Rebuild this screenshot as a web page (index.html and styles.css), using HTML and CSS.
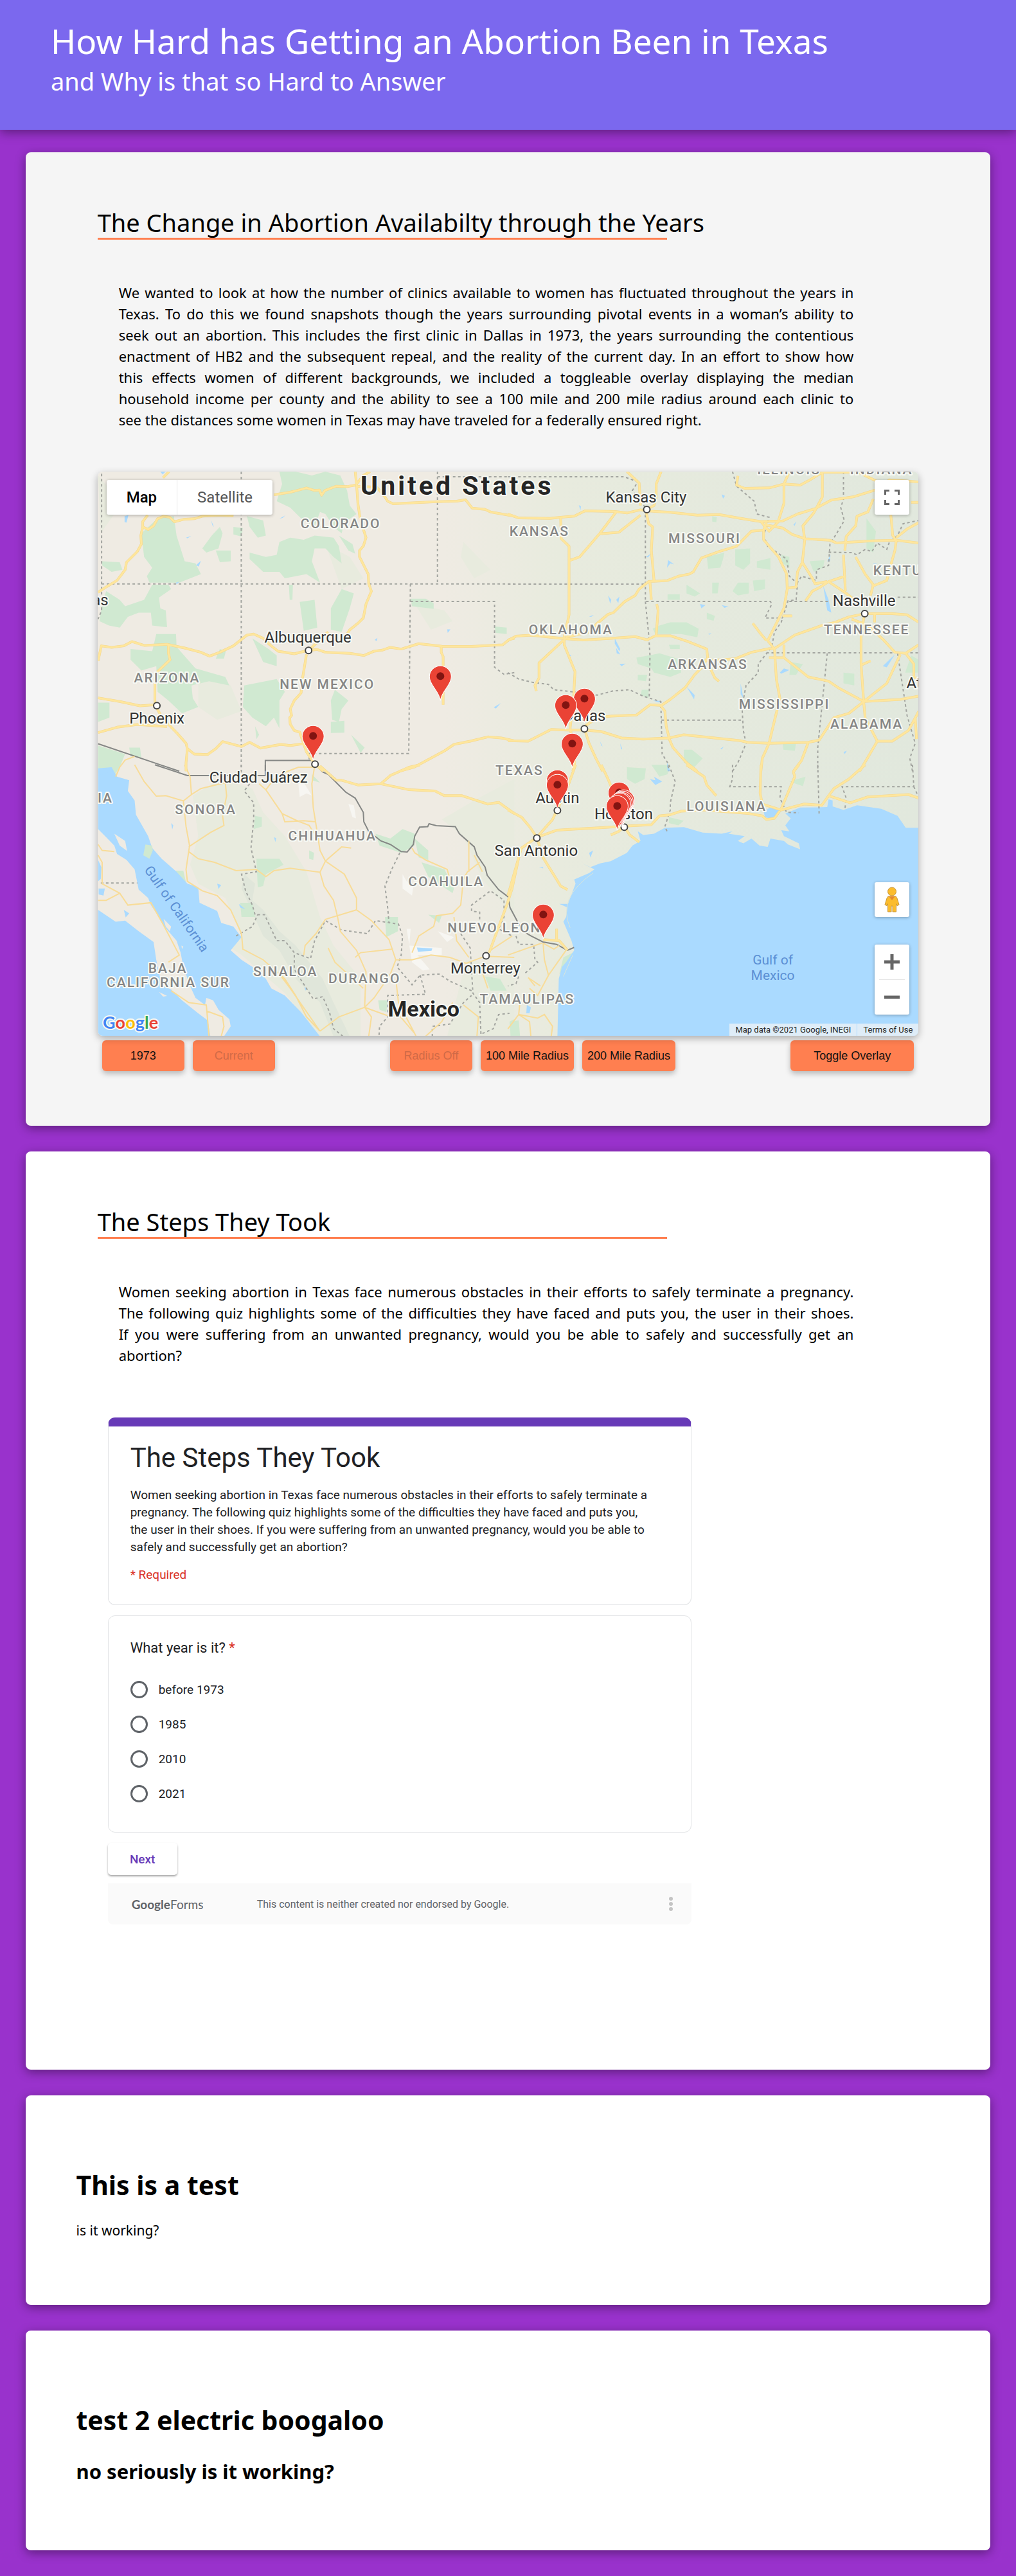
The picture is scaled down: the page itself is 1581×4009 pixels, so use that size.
FILE: index.html
```html
<!DOCTYPE html>
<html lang="en">
<head>
<meta charset="utf-8">
<meta name="viewport" content="width=device-width, initial-scale=1">
<title>How Hard has Getting an Abortion Been in Texas</title>
<link rel="stylesheet" href="styles.css">
</head>
<body>
<header class="banner">
  <h1 class="banner-title">How Hard has Getting an Abortion Been in Texas</h1>
  <p class="banner-sub">and Why is that so Hard to Answer</p>
</header>
<main class="cards">
  <section class="card card-tinted">
    <h2 class="story-title">The Change in Abortion Availabilty through the Years</h2>
    <hr class="rule">
    <p class="story">We wanted to look at how the number of clinics available to women has fluctuated throughout the years in Texas. To do this we found snapshots though the years surrounding pivotal events in a woman’s ability to seek&nbsp;out an abortion. This includes the first clinic in Dallas in 1973, the years surrounding the contentious enactment of HB2 and the subsequent repeal, and the reality of the current day. In an effort to show how this&nbsp;effects women of different backgrounds, we included a toggleable overlay displaying the median household&nbsp;income per county and the ability to see a 100 mile and 200 mile radius around each clinic to see&nbsp;the&nbsp;distances some women in Texas may have traveled for a federally ensured right.</p>
    <div class="map">
      <svg class="map-canvas" viewBox="0 0 1277 878" role="img" aria-label="Map of clinics in Texas">
        <defs>
          <linearGradient id="land" x1="0" x2="1" y1="0" y2="0">
            <stop offset="0" stop-color="#efebe3"/><stop offset=".42" stop-color="#efebe3"/>
            <stop offset=".56" stop-color="#e8ebde"/><stop offset="1" stop-color="#e1e8dd"/>
          </linearGradient>
          <g id="highways">
            <path transform="matrix(.4209 0 0 .3333 -12 -14)" d="M270 70L292 42M213 245L195 275 195 300 188 340 190 380 175 415 135 465 130 500 100 550 60 580 30 605M195 300L215 312 235 295 250 262 272 250 295 255 312 276 345 265 385 262 415 250 480 245 530 248M680 150L740 138 765 130 800 118 830 130 848 128 856 152 868 130 910 110 950 112 980 105M980 42L985 100 990 190 998 260 1010 310 1020 350 1010 390 996 410 996 440 1028 520 1030 565 1040 600 1020 660 1010 725 990 750 960 780 950 800M985 110L1060 115 1090 160 1100 180 1120 192 1280 182 1355 180 1388 173 1412 212 1460 218 1480 230 1568 250M985 100L1010 60 1035 42M30 925L42 855 80 862 125 855 155 835 200 853 285 848 350 865 410 885 442 903 480 885 530 855 580 805 605 800 640 820 665 850 695 880 755 892 800 878 840 872 870 885 960 890 1012 900 1050 880 1080 875 1110 862 1150 870 1215 845 1300 857 1410 858 1525 850 1550 825 1568 820M290 850L290 890 296 920 250 975 240 1010 240 1130 262 1180 285 1215 320 1260 355 1310 360 1335 355 1400 355 1440M30 1098L110 1115 185 1135 240 1130M30 1260L100 1235 175 1222 285 1232M360 1335L385 1360 435 1362 465 1335 490 1302 560 1325 590 1305 630 1332 705 1315 740 1320 800 1310M800 895L785 1010 780 1075 755 1110 740 1150 745 1180 738 1190 740 1220 755 1250 775 1258 800 1350 830 1405 862 1440M1298 860L1298 885 1305 905 1305 1130M1145 1440L1200 1420 1310 1345 1345 1315 1405 1300 1470 1280 1520 1285 1568 1298M805 880L880 790"/>
            <path transform="matrix(.4209 0 0 .3333 638 -14)" d="M0 240L40 258 155 260 195 255 245 250 285 225 395 228 440 235 490 220 510 225 600 232 700 245 780 242 860 260 935 275 1015 272 1070 240 1135 215 1195 175 1275 160 1365 125 1410 80 1518 90M440 42L485 95 490 200M566 42L548 100 548 160 540 200 510 220M195 258L197 355 226 390 226 455 226 710 220 745 208 800 208 850 248 975 243 1090 230 1240 240 1300 247 1400 240 1440M400 230L340 330 265 440 226 458M490 245L450 285 410 325 340 332M510 225L520 285 535 300 530 410 540 550M945 315L900 320 865 365 845 390 780 415 715 445 685 510 670 520 630 530 590 550 520 555 485 590 470 620 430 650 390 700 370 708 330 750 300 790 215 815M525 560L530 640M550 660L555 690 548 805M0 830L30 810 85 805 210 822 280 828 380 820 470 812 515 827 545 808 600 808 665 835 735 870 738 910 720 950 690 990 655 1050 600 1105 565 1135 580 1160 585 1230 598 1295 610 1330 660 1400 700 1440M740 940L765 1005 780 1020M565 1133L525 1130 475 1178 380 1183 330 1190 285 1230M725 925L840 915 900 885 965 868 985 868 1060 805 1160 760 1210 745 1260 720 1318 705 1420 705 1475 710 1518 745M850 62L845 105 875 120 965 118 1020 100 1080 105 1110 85 1162 45 1270 45M1290 42L1360 85M1040 42L1020 100 1020 190 1000 270M1162 42L1162 160 1130 235 1090 295 1097 360 1088 465 1125 540 1135 565 1180 555M935 275L965 320 1000 275M950 290L1015 305 1050 335 1097 355 1190 362 1215 375 1345 365 1435 362 1518 375M955 280L945 315 945 360 1000 440 1030 520 1032 590 1020 680 960 830 985 870 992 1010 1005 1100 980 1230 965 1310 940 1380 935 1440M1088 465L1070 510 1065 580 1035 585M1050 715H1015M905 750L935 800 955 830M1350 170L1330 230 1290 250 1285 295 1250 345 1245 410M1240 430L1247 600M1285 440L1320 520 1350 570 1340 620M1415 245L1422 340 1435 365 1430 410 1410 500 1400 550 1350 575M1435 350L1475 310 1518 280M1490 185H1518M1100 645L1125 600 1155 580 1185 555 1250 610 1310 670M1185 555L1245 530M1318 705L1305 800 1305 940 1315 1120 1320 1190 1365 1300 1300 1440M1270 730L1330 760 1390 830 1430 885 1470 890 1518 850M1355 705V745M965 910H1020L1110 1000 1185 1020 1220 1050 1315 1115 1450 1105 1518 1090M1020 850V910M1305 945L1340 925M1450 895L1400 1030 1310 1120 1260 1170 1205 1190 1150 1295 1110 1305 965 1310 885 1305 860 1298 650 1270 595 1285 500 1290 420 1285 345 1255 285 1248 220 1248 160 1245 75 1300 0 1298M1110 1305L1085 1390 1055 1440M1365 1300L1420 1300 1480 1250 1510 1180 1518 1160M1470 890L1500 940 1500 1000 1518 1010M1505 1190L1510 1290M285 1250L300 1310 325 1380 350 1440M208 825L170 870 115 935 115 1005 100 1040 105 1065"/>
            <path transform="matrix(.4209 0 0 .3699 -12 456)" d="M850 5L910 65 930 65 990 85 1075 80 1110 45 1150 25 1180 10 1220 0M1075 80L1180 105 1275 110 1310 130 1375 130 1470 165 1510 158 1568 205M1590 360L1560 520 1540 590 1475 790"/>
            <path transform="matrix(.4209 0 0 .3699 638 456)" d="M250 0L225 80 190 170 165 230 107 305M0 190L50 220 80 260 107 305 180 275 250 270 340 265 430 258 530 252 560 215 600 210 640 195 720 190 890 205 940 215 955 230 985 225 1010 185 1060 50 1055 30 1075 0M345 0L370 60 385 100 430 260 450 295 485 325M380 295L410 280 430 260M107 305L50 350 30 430 0 550M107 305L130 390 195 510 220 525M660 0L725 50 735 85 770 130M935 0L932 120 940 165 1010 190 1095 165 1160 170 1185 130 1205 100 1260 60 1320 0M1185 130L1265 160 1330 135 1480 125 1518 140M130 735L190 740 220 780M180 690V735"/>
          </g>
          <g id="pin">
            <path class="pin-body" d="M0 0C-2-15-17-24-17-37A17 17 0 0 1 17-37C17-24 2-15 0 0Z"/>
            <circle class="pin-dot" cy="-38" r="6"/>
          </g>
        </defs>
        <rect width="1277" height="878" fill="url(#land)"/>
        <g class="meadow">
          <path transform="matrix(.4209 0 0 .3699 -12 456)" d="M380 130L480 60 600 100 640 200 720 300 800 450 850 640 900 760 1000 900 1000 1142H850L720 960 560 800 520 770 560 720 500 560 400 500 370 420 400 300ZM1300 230L1420 150 1568 60V640L1450 480 1380 300ZM1390 820L1568 850V1142H1320Z"/>
          <path transform="matrix(.4209 0 0 .3333 -12 -14)" d="M400 960L520 1040 560 1160 470 1200 400 1140ZM30 60L70 120 90 240 40 330ZM870 380L960 440 1010 540 930 590ZM1200 660L1310 690 1340 740 1260 780ZM1380 370L1480 500 1420 540 1370 440Z"/>
        </g>
        <path class="ridge" transform="matrix(.4209 0 0 .3699 -12 456)" d="M570 460L610 500 600 570 640 610 700 700 760 760 860 900 900 1000 960 1142 900 1142 850 1000 760 900 700 780 640 720 600 620 560 520Z"/>
        <g class="park">
          <path transform="matrix(.4209 0 0 .3333 -12 -14)" d="M700 42H760L820 60 870 42 925 60 950 130 960 200 985 240 940 280 930 330 900 300 870 240 850 230 830 300 780 260 740 210 690 180 710 100ZM580 250L640 270 650 340 620 350 590 300ZM590 420L650 440 690 430 700 370 740 350 790 360 830 340 900 350 920 390 930 470 900 440 870 400 830 400 820 460 850 560 800 520 720 540 700 510 640 510 590 450ZM920 340L970 380 980 425 955 410ZM250 260L310 250 320 340 350 460 390 470 410 520 330 560 220 560 210 530 230 490 200 440 190 330ZM480 300L490 330 475 400 430 420 415 400 450 340ZM465 410H520V460L480 465ZM45 460L110 465 120 500 80 510 45 480ZM530 300L565 305 560 345 530 335ZM60 600L110 640 130 670 200 640 230 570 290 570 300 590 255 630 260 680 280 690 285 768 230 760 225 700 180 700 140 720 110 770 70 760 35 740 45 660ZM245 800H318L320 860 390 960 500 1000 515 1040 440 1020 375 1040 380 1100 400 1140 340 1170 290 1110 250 1070 245 950 190 970 150 920 150 870 230 880ZM775 650L830 640 840 770 790 785ZM890 680L930 590 975 610 960 680 930 790 890 780ZM735 570H750L748 640 738 640ZM600 820L660 870 690 900 690 950 640 930ZM480 870L502 880 495 915 465 915ZM570 1040L690 1010 720 1070 700 1110 700 1240 680 1190 650 1230 600 1190 565 1140ZM890 1210L940 1205 940 1260 890 1262ZM965 1270L1015 1330 1000 1355ZM890 1110L905 1060 955 1110 930 1150 920 1210 895 1200ZM610 1230L625 1270 615 1290ZM1185 635H1240L1270 655V682L1190 670ZM1495 765L1540 770V800L1500 795ZM30 1120H72V1190L30 1210ZM145 1330H185L190 1380 150 1370ZM30 1320L130 1360 110 1420 90 1460 30 1450Z"/>
          <path transform="matrix(.4209 0 0 .3333 638 -14)" d="M735 440L800 420 795 450 785 490 740 495ZM840 405L895 400V470L870 500 840 480ZM920 460L970 445V500L920 490ZM850 560H890V610L850 620 830 600ZM905 550L950 545V590L910 600ZM755 560H780L775 610 755 610ZM660 570L710 610 690 625 660 610ZM590 615H635V640H590ZM560 760L600 745H660L705 775 700 815 640 800 545 800 535 775ZM595 850H635V870H600ZM520 900L560 890 640 920V980L600 1000 540 980 530 960 480 940 475 910ZM735 700L765 715 760 738 735 730ZM1115 460L1170 455 1165 490 1130 510ZM1325 260L1360 320 1350 420 1325 400ZM1045 930L1090 940 1065 990 1040 990ZM1240 980L1280 985V1040L1240 1030ZM1490 900L1518 920V980H1468ZM1015 1310H1065L1060 1345 1018 1340ZM650 1340H680L720 1380 690 1420 650 1400ZM1010 430L1040 440V490L1015 470ZM480 990L515 990 510 1020 480 1015ZM495 1060L520 1060 520 1100 490 1085ZM755 250L772 255 770 278 755 275Z"/>
          <path transform="matrix(.4209 0 0 .3699 -12 456)" d="M610 215L635 220V260L605 270ZM615 395H700L715 420 650 460 640 510 620 515ZM555 580H600L610 640H560ZM310 445H345L355 495 325 480ZM1055 290L1110 310 1155 270 1200 290V340L1150 370 1070 340ZM1200 310L1250 360V400L1215 390ZM1225 410L1310 440 1345 520 1340 540 1250 470ZM1090 640H1138V700L1095 725ZM1065 990H1100L1095 1040 1070 1030ZM1460 890L1515 900 1540 950 1480 950ZM1550 1080L1568 1070V1142H1555ZM1250 630L1300 635 1290 665ZM810 360L828 370 825 400 810 395ZM820 40L850 75 820 65Z"/>
          <path transform="matrix(.4209 0 0 .3699 638 456)" d="M440 10L510 15 505 60 470 80 440 60ZM595 220L650 235 630 255 595 245ZM205 810L240 790 225 830 190 880ZM10 1080L40 1075 45 1142H10ZM530 0H600L590 40 560 50ZM1040 70L1100 50 1090 90Z"/>
        </g>
        <g class="salt" transform="matrix(.4209 0 0 .3699 -12 456)">
          <path d="M770 80L790 75 820 130 800 120 775 135ZM955 165L975 170 983 225 970 220ZM1155 460L1170 490 1195 510 1190 550 1155 520ZM1170 690L1185 690 1180 760 1300 770 1300 800 1210 800 1255 860 1230 865 1190 830ZM1285 700L1345 725 1320 745Z"/>
        </g>
        <g class="water">
          <path transform="matrix(.4209 0 0 .3699 -12 456)" d="M30 15L80 10 100 50 145 65 140 110 165 150 170 210 215 300 230 350 265 395 320 450 360 500 400 515 405 580 470 615 485 665 530 680 560 725 520 780 560 820 600 850 650 900 670 940 720 970 780 1040 850 1142H495L520 1100 515 1070 475 1030 455 990 430 980 425 1010 390 980 370 930 345 850 335 790 320 740 275 680 255 640 225 590 215 560 180 525 165 440 135 400 100 375 90 340 60 305 30 270ZM30 610L95 660 130 655 180 700 235 745 245 820 260 900 270 930 300 945 340 990 400 1045 435 1075 445 1142H30ZM30 400L42 430 40 480 30 490ZM32 520H55L50 550 32 545ZM1208 768L1265 772 1262 782 1212 786ZM470 500L485 505 475 522ZM550 585L575 608 555 600ZM680 305L688 308 685 325ZM300 245L308 255 304 272ZM125 610L145 625 132 642ZM792 935L803 940 796 950Z"/>
          <path transform="matrix(.4209 0 0 .3699 638 456)" d="M183 1142L188 900 200 850 215 830 245 780 235 740 205 660 215 640 220 600 190 585 222 585 250 500 245 482 300 455 320 440 275 415 305 430 340 415 380 405 440 370 460 340 490 320 480 280 500 295 540 290 580 265 650 262 720 285 790 290 830 280 815 290 875 300 850 320 870 330 900 310 930 340 960 345 970 310 1020 320 1035 335 1080 355 1075 330 1020 300 1010 275 1040 280 1025 255 1045 225 1025 205 1080 180 1180 178 1185 145 1200 150 1200 175 1240 190 1290 170 1380 185 1440 215 1470 265H1518V1142ZM945 195L970 180 1010 195 985 230 950 220ZM525 60L545 65 540 50 570 70 545 85ZM115 430H130V436ZM300 370L315 360 305 390ZM1025 125L1035 130 1030 140ZM70 1010L85 1020 80 1045 68 1045Z"/>
          <path transform="matrix(.4209 0 0 .3333 -12 -14)" d="M260 42H280L268 55ZM128 250L142 245 135 280 128 278ZM355 350L375 342 360 353ZM392 478L410 458 402 485ZM700 262L722 246 712 258ZM1320 778L1332 778 1322 795ZM1492 1142L1518 1122 1500 1148ZM1052 828L1062 818 1060 832ZM318 560L330 556 320 568ZM448 270L458 300 452 292ZM35 1430L90 1440 30 1460Z"/>
          <path transform="matrix(.4209 0 0 .3333 638 -14)" d="M262 198L270 205 268 222ZM592 455L615 475 600 470 588 490ZM790 148L802 155 795 168ZM370 620L382 640 378 658ZM400 640L412 625 408 655ZM395 820L415 870 412 880 395 845ZM400 865L415 895 402 890ZM1180 460L1192 430 1190 460ZM1165 575L1185 640 1195 700 1180 690ZM1385 950L1430 895 1400 955ZM1005 980L1020 960 1040 968 1010 985ZM860 1030L870 1100 860 1080ZM300 718L318 710 308 720ZM412 940L435 938 420 950ZM660 1045L690 1085 688 1105ZM1055 290L1065 275 1060 295ZM510 440L528 425 518 442ZM710 660L730 665 715 680ZM790 665L815 672 800 678ZM740 800L752 795 745 803ZM222 892L235 900 225 905ZM1240 1350L1252 1345 1245 1360ZM785 1335L798 1325 790 1338ZM415 1310L422 1335 418 1340ZM340 1300L350 1325 345 1320ZM1350 470L1365 472 1355 480ZM535 1110L562 1112 560 1120ZM588 1400L600 1440 590 1440Z"/>
        </g>
        <g transform="matrix(.4209 0 0 .3699 -12 456)">
          <path class="park" d="M205 335L230 340 232 360 220 395 197 380Z"/>
          <path class="isle" d="M90 290L130 320 137 362 110 340ZM272 648L300 680 295 700 280 680ZM338 760L345 765 340 775ZM255 955L285 972 270 975Z"/>
        </g>
        <path class="barrier" transform="matrix(.4209 0 0 .3699 638 456)" d="M315 455Q180 560 230 685M240 800L205 890"/>
        <g class="borders">
          <path transform="matrix(.4209 0 0 .3333 -12 -14)" d="M43 52V690L30 730M559 42V1440M43 566H1568M1284 42V566M1284 66H1568M1184 566L1178 1358H810V1390M1184 648H1495V955L1530 988 1568 980"/>
          <path transform="matrix(.4209 0 0 .3333 638 -14)" d="M0 66H430L480 90 460 130 490 180 508 210V648H970L975 660 950 725H1015M0 567H508M508 648L520 800 525 900 522 1100M0 980L40 1010 90 1025 150 1035 170 1060 210 1065 240 1070 330 1085 390 1065 450 1060 500 1090 565 1115 570 1360 590 1400 595 1440M567 1202H865M830 42L845 110 910 180 920 240 965 255 945 340 960 390 1030 450 1040 530 1070 565 1065 640 1035 645 1010 745 985 790 975 860 925 940 925 980 880 1040 865 1140 870 1250 880 1310 850 1400 830 1440M955 888H1518M1040 648H1185M1440 628H1518M1240 42V170L1230 210 1243 270 1215 330 1190 380 1185 480 1140 500 1140 550 1085 530 1070 560M1185 418L1270 420 1290 430 1320 405 1345 415 1365 375 1400 405 1410 370 1440 340 1460 285 1518 270M1180 890L1145 1330V1440M1440 890L1475 1180 1505 1310 1485 1380 1495 1440"/>
          <path transform="matrix(.4209 0 0 .3699 -12 456)" d="M559 0V45M590 80L570 110 605 160 605 230 595 350 615 450 560 460 575 530 600 590 610 630 645 630 690 740 720 740 755 790 815 815 830 740 870 655 930 695 1025 710 1055 655 1140 670 1155 720 1150 800 1135 850 1190 925 1220 885 1290 880 1330 910 1410 950M540 720L600 680 620 630M755 800V860L825 985 860 975 885 1040 900 1110 935 1142M1145 370L1115 440 1090 510 1100 600 1105 665M1220 885L1240 965 1100 970V1060L1070 1100 1068 1142M1370 710L1405 770 1415 960 1440 1000 1445 1142M1265 1142V1100L1330 1090 1380 1000 1410 970M1440 650V620L1410 615V590L1480 530 1530 570 1530 640 1510 690 1560 720M40 497H175M1450 1130L1490 1110 1510 1050 1550 1045"/>
          <path transform="matrix(.4209 0 0 .3699 638 456)" d="M595 0L618 70 600 160 600 190 580 260 590 285M830 0V60L820 92H1010L1005 140 1030 200 1075 202M1145 0L1150 205M1495 0L1500 92H1235L1250 140 1245 190M1500 92L1515 130M30 720L40 755H95L100 820 110 830 60 880M40 890L30 920 0 930"/>
        </g>
        <g class="frontier">
          <path transform="matrix(.4209 0 0 .3333 -12 -14)" d="M30 1312L330 1440M648 1440V1390H820L840 1410"/>
          <path transform="matrix(.4209 0 0 .3699 -12 456)" d="M240 0L360 45H648V0M835 0L860 30 880 40 945 115 980 140 1010 200 1012 240 1030 280 1075 320 1110 335 1150 365 1172 367 1195 335 1200 300 1218 262 1248 260 1253 248 1280 256 1350 260 1365 290 1420 345 1430 380 1460 430 1468 465 1510 525 1545 555 1552 600 1580 660 1600 700 1630 720 1674 745 1724 755 1764 780 1789 768"/>
        </g>
        <g class="mex-roads">
          <path transform="matrix(.4209 0 0 .3699 -12 456)" d="M95 50L110 10 130-20 165-35M165 0L200 70 245 132 280 130 345 152 375 125 370 50 350 0M345 152L355 260 368 340 355 440 360 490 415 530 470 550 520 610 560 710 565 775 640 820 720 900 760 970 800 1060 850 1120M375 125L410 100 500 75 505 130 490 215 495 255 445 285 365 345M365 365L400 395 460 410 540 445 615 440 650 470 680 445 740 435 850 452 870 405 850 360 835 250 825 180 820 80 830 5M625 80L650 105 710 205 765 235 810 255 835 300M710 205L720 240 790 235 835 240M650 105L690 45 770 10 830 10M870 405L930 345 965 350M870 405L940 460 985 560 985 610 1040 655 1105 735 1130 820M850 452L865 510 900 570 915 640 925 700 985 780 1020 870 1015 1020M985 610L870 650 835 710 795 760 790 800M1130 820L1110 880 1050 980 1015 1020 920 1060 850 1120M700 880L740 940 850 1120M1130 820L1190 820 1260 800 1330 810 1390 835 1460 805 1568 810M1190 790L1215 720 1270 680 1280 635 1340 625 1370 590 1380 480 1395 450 1440 410M1400 450V320M1190 350L1200 370 1240 400 1320 440 1330 480M1345 640L1355 740 1400 810M1015 1020L1100 1055 1140 1050 1200 1130 1205 1142M1015 1020L1040 1060 1030 1142M1130 900L1140 1000 1200 1130M1340 1000L1300 1080 1240 1142M1380 1010L1435 1060 1430 1142M980 810L1000 790 1120 775M880 770L905 830 1010 940M30 335L45 360 90 365M30 380L45 410V500L110 540 140 590 225 580 270 670 330 800 290 830M30 570H60L110 540M300 950L365 1000 430 1010 440 1142M430 1035L490 1060 495 1100 485 1142M1420 380L1450 450M1480 780L1560 720M1440 840L1470 940"/>
          <path transform="matrix(.4209 0 0 .3699 638 456)" d="M130 750L135 820 150 885 110 970 80 940M215 780L150 885M0 800L125 750M45 990L40 1050 110 1065 135 1050 165 1100 160 1142M40 1050L80 1080 85 1142M100 930L75 895 120 930M0 1110L40 1050M130 750L170 775 190 760"/>
        </g>
        <use href="#highways" class="casing"/>
        <use href="#highways" class="road"/>
        <g class="towns">
          <circle cx="328" cy="278" r="5"/><circle cx="92" cy="364" r="5"/><circle cx="338" cy="455" r="5"/><circle cx="854" cy="59" r="5"/><circle cx="1193" cy="221" r="5"/><circle cx="757" cy="400" r="5"/><circle cx="715" cy="527" r="5"/><circle cx="819" cy="553" r="5"/><circle cx="683" cy="570" r="5"/><circle cx="604" cy="753" r="5"/>
        </g>
        <g class="label state">
          <text x="378" y="88">COLORADO</text><text x="108" y="328">ARIZONA</text><text x="357" y="338">NEW MEXICO</text>
          <text x="687" y="100">KANSAS</text><text x="944" y="111">MISSOURI</text><text x="1075" y="4">ILLINOIS</text><text x="1219" y="4">INDIANA</text>
          <text x="1267" y="161">KENTUCKY</text><text x="1196" y="253">TENNESSEE</text><text x="736" y="253">OKLAHOMA</text><text x="949" y="307">ARKANSAS</text>
          <text x="1068" y="369">MISSISSIPPI</text><text x="1196" y="400">ALABAMA</text><text x="656" y="472">TEXAS</text><text x="978" y="528">LOUISIANA</text>
          <text x="12" y="515">IA</text><text x="168" y="533">SONORA</text><text x="365" y="574">CHIHUAHUA</text><text x="542" y="645">COAHUILA</text><text x="617" y="717">NUEVO LEON</text>
          <text x="292" y="785">SINALOA</text><text x="415" y="796">DURANGO</text><text x="109" y="780">BAJA</text><text x="110" y="802">CALIFORNIA SUR</text><text x="668" y="828">TAMAULIPAS</text>
        </g>
        <g class="label city">
          <text x="4" y="208">as</text><text x="327" y="266">Albuquerque</text><text x="92" y="392">Phoenix</text><text x="250" y="484">Ciudad Juárez</text>
          <text x="853" y="48">Kansas City</text><text x="1192" y="209">Nashville</text><text x="1296" y="337">Atlanta</text><text x="757" y="388">Dallas</text>
          <text x="715" y="516">Austin</text><text x="818" y="541">Houston</text><text x="682" y="598">San Antonio</text><text x="603" y="781">Monterrey</text>
        </g>
        <g class="label country">
          <text class="us" x="559" y="36">United States</text><text x="507" y="848">Mexico</text>
        </g>
        <g class="sea">
          <text x="1050" y="767">Gulf of</text><text x="1050" y="791">Mexico</text>
          <text transform="translate(117 684) rotate(55)">Gulf of California</text>
        </g>
        <g>
          <use href="#pin" x="533" y="356"/><use href="#pin" x="757" y="391"/><use href="#pin" x="728" y="401"/><use href="#pin" x="335" y="449"/><use href="#pin" x="738" y="461"/>
          <use href="#pin" x="715" y="518"/><use href="#pin" x="715" y="525"/><use href="#pin" x="811" y="537"/><use href="#pin" x="818" y="549"/><use href="#pin" x="816" y="551"/><use href="#pin" x="814" y="553"/><use href="#pin" x="812" y="554"/><use href="#pin" x="808" y="558"/><use href="#pin" x="693" y="727"/>
        </g>
        <text class="label google" x="8" y="867"><tspan fill="#4285f4">G</tspan><tspan fill="#ea4335">o</tspan><tspan fill="#fbbc04">o</tspan><tspan fill="#4285f4">g</tspan><tspan fill="#34a853">l</tspan><tspan fill="#ea4335">e</tspan></text>
      </svg>
      <div class="map-types">
        <button type="button" class="map-type selected">Map</button>
        <button type="button" class="map-type">Satellite</button>
      </div>
      <button type="button" class="map-tool fullscreen" aria-label="Toggle fullscreen">
        <svg width="24" height="24" viewBox="0 0 24 24"><path d="M1.500 8V1.500H8M16 1.500h6.500V8M22.500 16v6.500H16M8 22.500H1.500V16" fill="none" stroke="#666" stroke-width="3"/></svg>
      </button>
      <div class="map-side">
        <button type="button" class="map-tool" aria-label="Street View">
          <svg width="24" height="40" viewBox="0 0 24 40"><path d="M6 15h12l2 3 3 10-3 1.500-1.500-3V39h-5.500v-9h-2v9H5.500V26.500L4 29.500 1 28l3-10z" fill="#fbbc2d" stroke="#c8963a"/><path d="M7 15l5 6 5-6z" fill="#e58a2c"/><circle cx="12" cy="7.500" r="6.500" fill="#fbbc2d" stroke="#c8963a"/></svg>
        </button>
        <div class="zoom">
          <button type="button" class="zoom-key" aria-label="Zoom in"><svg width="24" height="24" viewBox="0 0 24 24"><path d="M0 12h24M12 0v24" stroke="#666" stroke-width="5"/></svg></button>
          <button type="button" class="zoom-key" aria-label="Zoom out"><svg width="24" height="24" viewBox="0 0 24 24"><path d="M0 12h24" stroke="#666" stroke-width="5"/></svg></button>
        </div>
      </div>
      <div class="map-credit"><span>Map data ©2021 Google, INEGI</span><a href="#terms">Terms of Use</a></div>
    </div>
    <div class="toolbar">
      <div class="tool-group">
        <button type="button" class="tool">1973</button>
        <button type="button" class="tool" disabled>Current</button>
      </div>
      <div class="tool-group">
        <button type="button" class="tool" disabled>Radius Off</button>
        <button type="button" class="tool">100 Mile Radius</button>
        <button type="button" class="tool">200 Mile Radius</button>
      </div>
      <div class="tool-group">
        <button type="button" class="tool tool-wide">Toggle Overlay</button>
      </div>
    </div>
  </section>

  <section class="card">
    <h2 class="story-title">The Steps They Took</h2>
    <hr class="rule">
    <p class="story">Women seeking abortion in Texas face numerous obstacles in their efforts to safely terminate a pregnancy. The following quiz highlights some of the difficulties they have faced and puts you, the user in their shoes. If&nbsp;you were suffering from an unwanted pregnancy, would you be able to safely and successfully get an abortion?</p>
    <form class="quiz">
      <div class="quiz-card quiz-intro">
        <h3 class="quiz-title">The Steps They Took</h3>
        <p class="quiz-text">Women seeking abortion in Texas face numerous obstacles in their efforts to safely terminate a pregnancy. The following quiz highlights some of the difficulties they have faced and puts you, the user in their shoes. If you were suffering from an unwanted pregnancy, would you be able to safely and successfully get an abortion?</p>
        <p class="required">* Required</p>
      </div>
      <fieldset class="quiz-card quiz-question">
        <legend class="question">What year is it? <span class="star">*</span></legend>
        <label class="choice"><input type="radio" name="year" value="before 1973">before 1973</label>
        <label class="choice"><input type="radio" name="year" value="1985">1985</label>
        <label class="choice"><input type="radio" name="year" value="2010">2010</label>
        <label class="choice"><input type="radio" name="year" value="2021">2021</label>
      </fieldset>
      <button type="button" class="next">Next</button>
      <div class="quiz-footer">
        <span class="forms-logo"><b>Google</b>Forms</span>
        <span class="disclaimer">This content is neither created nor endorsed by Google.</span>
        <button type="button" class="more" aria-label="More"><svg width="6" height="24" viewBox="0 0 6 24" fill="#c4c4c4"><circle cx="3" cy="4" r="3"/><circle cx="3" cy="12" r="3"/><circle cx="3" cy="20" r="3"/></svg></button>
      </div>
    </form>
  </section>

  <section class="card card-note">
    <h1 class="note-title">This is a test</h1>
    <p class="note-text">is it working?</p>
  </section>

  <section class="card card-note">
    <h1 class="note-title">test 2 electric boogaloo</h1>
    <h2 class="note-sub">no seriously is it working?</h2>
  </section>
</main>
</body>
</html>
```
FILE: styles.css
```css
* { box-sizing: border-box; }

body {
  margin: 0;
  background: #9932cc;
  color: #000;
  font-family: "Segoe UI", "Noto Sans", "Open Sans", sans-serif;
}

h1, h2, h3, p { margin: 0; }
button { font: inherit; border: 0; padding: 0; cursor: pointer; }

.banner {
  background: #7b68ee;
  color: #fff;
  padding: 26px 5% 52px;
  box-shadow: 0 4px 16px rgba(0, 0, 0, .4);
}
.banner-title { font-size: 53px; line-height: 76px; font-weight: 400; }
.banner-sub { font-size: 38px; line-height: 48px; }

.cards {
  width: 95%;
  margin: 35px auto 39px;
  display: flex;
  flex-direction: column;
  gap: 40px;
}
.card {
  background: #fff;
  border-radius: 8px;
  padding: 85px 7%;
  padding-inline: calc(7% + 7px);
  box-shadow: 0 4px 16px rgba(0, 0, 0, .4);
}
.card-tinted { background: #f5f5f5; }

.story-title { font-size: 38px; line-height: 48px; font-weight: 400; white-space: nowrap; }
.rule { width: 70%; max-width: 886px; height: 3px; margin: 0; border: 0; background: #ff7f50; }
.story {
  max-width: 1210px;
  margin: 66px 101px 64px 33px;
  font-size: 22px;
  line-height: 33px;
  text-align: justify;
}

/* map */
.map {
  position: relative;
  overflow: hidden;
  border-radius: 8px;
  box-shadow: 0 4px 12px rgba(0, 0, 0, .3);
  font-family: Roboto, sans-serif;
}
.map-canvas { display: block; width: 100%; height: auto; }
.map-canvas path { vector-effect: non-scaling-stroke; }
.meadow { fill: #e8ebde; }
.ridge { fill: #e0e6da; }
.park { fill: #d0e9d1; }
.salt { fill: #f7f6f2; }
.water { fill: #aadaff; }
.isle { fill: #efebe3; }
.barrier { fill: none; stroke: #d9e6dc; stroke-width: 1; }
.borders { fill: none; stroke: #a3a5a0; stroke-width: 2; stroke-dasharray: 4 4; }
.frontier { fill: none; stroke: #858785; stroke-width: 2; }
.mex-roads { fill: none; stroke: #f8dc98; stroke-width: 2; }
.casing { fill: none; stroke: #f3d68c; stroke-width: 4; stroke-linejoin: round; }
.road { fill: none; stroke: #fee69d; stroke-width: 3; stroke-linejoin: round; }
.towns { fill: #fff; stroke: #444; stroke-width: 2; }
.label {
  text-anchor: middle;
  paint-order: stroke;
  stroke: #f8faf5;
  stroke-width: 4px;
  stroke-linejoin: round;
}
.state { font-size: 21px; font-weight: 500; fill: #858585; letter-spacing: 2px; }
.city { font-size: 24px; fill: #333; }
.country { font-size: 34px; font-weight: 700; fill: #252525; }
.us { font-size: 41px; letter-spacing: 4px; }
.sea { font-size: 21px; fill: #5b8fd4; text-anchor: middle; }
.google { font-family: Lato, sans-serif; font-size: 27px; font-weight: 700; text-anchor: start; }
.pin-body { fill: #ea4335; stroke: #fff; stroke-width: 1; }
.pin-dot { fill: #811411; }

.map-types, .fullscreen, .map-side, .map-credit { position: absolute; }
.map-types { top: 13px; left: 14px; display: flex; border-radius: 3px; background: #fff; box-shadow: 0 1px 5px rgba(0, 0, 0, .3); }
.map-type { height: 54px; padding: 0 31px; background: none; font-size: 24px; color: #565656; }
.map-type.selected { color: #000; font-weight: 500; border-right: 1px solid #e6e6e6; }
.map-tool {
  display: grid;
  place-items: center;
  width: 54px;
  height: 54px;
  background: #fff;
  border-radius: 3px;
  box-shadow: 0 1px 5px rgba(0, 0, 0, .3);
}
.fullscreen { top: 13px; right: 14px; }
.map-side { right: 14px; bottom: 33px; display: flex; flex-direction: column; gap: 43px; }
.zoom { width: 54px; background: #fff; border-radius: 3px; box-shadow: 0 1px 5px rgba(0, 0, 0, .3); }
.zoom-key { display: grid; place-items: center; width: 100%; height: 54px; background: none; }
.zoom-key + .zoom-key { height: 55px; background: linear-gradient(#e6e6e6, #e6e6e6) center top / 40px 1px no-repeat; }
.map-credit { right: 0; bottom: 0; display: flex; gap: 1px; font-size: 13px; line-height: 19px; color: #222; }
.map-credit > * { padding: 0 9px; background: rgba(245, 245, 245, .7); color: inherit; text-decoration: none; }

.toolbar { display: flex; justify-content: space-between; margin-top: 7px; padding: 0 7px; }
.tool-group { display: flex; gap: 13px; }
.tool {
  min-width: 128px;
  height: 48px;
  padding: 0 8px;
  border-radius: 6px;
  background: #ff7f50;
  color: #111;
  font-family: "Liberation Sans", Arial, sans-serif;
  font-size: 18px;
  box-shadow: 0 4px 8px rgba(0, 0, 0, .25);
}
.tool:disabled { color: #cf6a47; cursor: default; }
.tool-wide { min-width: 192px; }

/* quiz */
.quiz {
  max-width: 940px;
  min-height: 946px;
  padding: 16px;
  font-family: Roboto, sans-serif;
  color: #202124;
}
.quiz-card { margin: 0 0 16px; border: 1px solid #e2e4e6; border-radius: 11px; padding: 0 34px; background: #fff; }
.quiz-intro { border-top: 14px solid #673ab7; padding-top: 22px; padding-bottom: 33px; }
.quiz-title { font-family: Roboto, sans-serif; font-size: 42px; line-height: 54px; font-weight: 400; }
.quiz-text { max-width: 820px; margin-top: 17px; font-size: 19px; line-height: 27px; }
.required { margin-top: 16px; font-size: 19px; line-height: 27px; color: #d93025; }
.quiz-question { padding-top: 35px; padding-bottom: 33px; }
.question { float: left; width: 100%; padding: 0; margin-bottom: 23px; font-size: 22px; line-height: 29px; }
.star { color: #d93025; }
.choice { clear: both; display: flex; align-items: center; gap: 17px; height: 54px; font-size: 19px; }
.choice input {
  appearance: none;
  width: 27px;
  height: 27px;
  margin: 0;
  border: 3px solid #5f6368;
  border-radius: 50%;
}
.next {
  display: block;
  width: 108px;
  height: 50px;
  margin-bottom: 13px;
  border-radius: 5px;
  background: #fff;
  color: #673ab7;
  font-size: 19px;
  font-weight: 500;
  box-shadow: 0 2px 3px rgba(0, 0, 0, .35);
}
.quiz-footer { display: flex; align-items: center; height: 64px; padding: 0 29px 0 37px; background: #fafafa; border-radius: 0 0 8px 8px; color: #5f6368; }
.forms-logo { width: 195px; font-family: Lato, sans-serif; font-size: 19px; }
.forms-logo b { font-weight: 700; }
.disclaimer { flex: 1; font-size: 16px; }
.more { background: none; display: flex; }

/* notes */
.card-note { padding: 109px 79px 102px; }
.note-title { font-size: 41px; line-height: 60px; font-weight: 700; }
.note-text { margin-top: 27px; font-size: 21px; line-height: 28px; }
.note-sub { margin-top: 29px; font-size: 31px; line-height: 42px; font-weight: 700; }
```
